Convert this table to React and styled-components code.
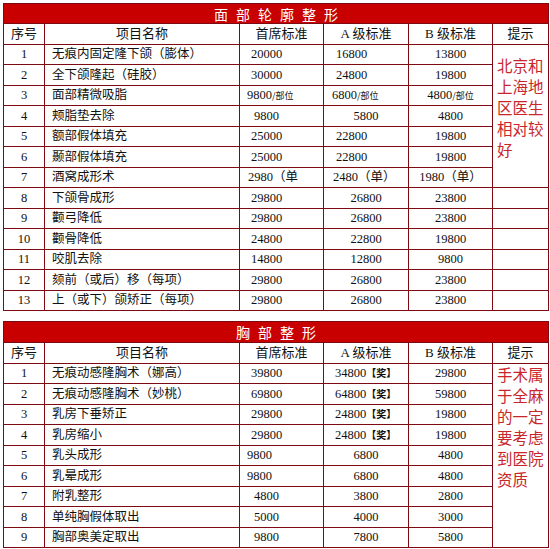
import React from 'react';
import styled, { createGlobalStyle } from 'styled-components';

const GlobalStyle = createGlobalStyle`
  body {
    margin: 0;
    background: #fff;
    font-family: "Liberation Serif", "Noto Sans CJK SC", serif;
    color: #111;
  }
`;

const Page = styled.div`
  width: 545px;
  padding: 3px 0 0 3px;
  display: flex;
  flex-direction: column;
  gap: 10px;
`;

const Table = styled.table`
  width: 545px;
  border-collapse: collapse;
  table-layout: fixed;
  border: 1px solid #7d0a12;
`;

const TitleCell = styled.th`
  height: ${(p) => p.$h}px;
  padding: 0 0 0 8px;
  background: #c80000;
  color: #fff;
  font-family: "Noto Sans CJK SC", sans-serif;
  font-weight: normal;
  font-size: 14px;
  line-height: 16px;
  letter-spacing: 8px;
  text-align: center;
  border: 1px solid #7d0a12;
`;

const Row = styled.tr`
  height: 20.5px;
`;

const HeadCell = styled.th`
  padding: 0;
  font-weight: normal;
  font-size: 13px;
  line-height: 16px;
  text-align: center;
  border: 1px solid #7d0a12;
`;

const NumCell = styled.td`
  padding: 0;
  font-size: 12.5px;
  line-height: 16px;
  text-align: center;
  border: 1px solid #7d0a12;
`;

const NameCell = styled.td`
  padding: 0 0 0 7px;
  font-size: 12.5px;
  line-height: 16px;
  white-space: nowrap;
  overflow: hidden;
  border: 1px solid #7d0a12;
`;

const PriceCell = styled.td`
  padding: 0 0 0 ${(p) => (p.$pad != null ? p.$pad : 0)}px;
  font-size: 12.5px;
  line-height: 16px;
  text-align: ${(p) => (p.$pad != null ? 'left' : 'center')};
  white-space: nowrap;
  overflow: hidden;
  border: 1px solid #7d0a12;
`;

const Unit = styled.span`
  font-family: "Noto Sans CJK SC", sans-serif;
  font-size: 9px;
`;

const Award = styled.span`
  font-family: "Noto Sans CJK SC", sans-serif;
  font-size: 10px;
  font-weight: bold;
`;

const TipCell = styled.td`
  padding: ${(p) => p.$top}px 2px 0 4px;
  vertical-align: top;
  color: #c8262b;
  font-family: "Noto Sans CJK SC", sans-serif;
  font-size: 15.5px;
  line-height: 21px;
  border: 1px solid #7d0a12;
`;

const faceRows = [
  ['无痕内固定隆下颌（膨体）', { v: '20000', pad: 11 }, { v: '16800', pad: 12 }, { v: '13800' }],
  ['全下颌隆起（硅胶）', { v: '30000', pad: 11 }, { v: '24800', pad: 12 }, { v: '19800' }],
  ['面部精微吸脂', { v: '9800', unit: '/部位', pad: 7 }, { v: '6800', unit: '/部位', pad: 8 }, { v: '4800', unit: '/部位' }],
  ['颊脂垫去除', { v: '9800', pad: 14 }, { v: '5800' }, { v: '4800' }],
  ['额部假体填充', { v: '25000', pad: 11 }, { v: '22800', pad: 12 }, { v: '19800' }],
  ['颞部假体填充', { v: '25000', pad: 11 }, { v: '22800', pad: 12 }, { v: '19800' }],
  ['酒窝成形术', { v: '2980（单', pad: 8 }, { v: '2480（单）', pad: 9 }, { v: '1980（单）' }],
  ['下颌骨成形', { v: '29800', pad: 11 }, { v: '26800' }, { v: '23800' }],
  ['颧弓降低', { v: '29800', pad: 11 }, { v: '26800' }, { v: '23800' }],
  ['颧骨降低', { v: '24800', pad: 11 }, { v: '22800' }, { v: '19800' }],
  ['咬肌去除', { v: '14800', pad: 11 }, { v: '12800' }, { v: '9800' }],
  ['颏前（或后）移（每项）', { v: '29800', pad: 11 }, { v: '26800' }, { v: '23800' }],
  ['上（或下）颌矫正（每项）', { v: '29800', pad: 11 }, { v: '26800' }, { v: '23800' }],
];

const chestRows = [
  ['无痕动感隆胸术（娜高）', { v: '39800', pad: 11 }, { v: '34800', award: true, pad: 11 }, { v: '29800' }],
  ['无痕动感隆胸术（妙桃）', { v: '69800', pad: 11 }, { v: '64800', award: true, pad: 11 }, { v: '59800' }],
  ['乳房下垂矫正', { v: '29800', pad: 11 }, { v: '24800', award: true, pad: 11 }, { v: '19800' }],
  ['乳房缩小', { v: '29800', pad: 11 }, { v: '24800', award: true, pad: 11 }, { v: '19800' }],
  ['乳头成形', { v: '9800', pad: 7 }, { v: '6800' }, { v: '4800' }],
  ['乳晕成形', { v: '9800', pad: 7 }, { v: '6800' }, { v: '4800' }],
  ['附乳整形', { v: '4800', pad: 14 }, { v: '3800' }, { v: '2800' }],
  ['单纯胸假体取出', { v: '5000', pad: 14 }, { v: '4000' }, { v: '3000' }],
  ['胸部奥美定取出', { v: '9800', pad: 14 }, { v: '7800' }, { v: '5800' }],
];

function Price({ cell }) {
  return (
    <PriceCell $pad={cell.pad}>
      {cell.v}
      {cell.unit && <Unit>{cell.unit}</Unit>}
      {cell.award && <Award>【奖】</Award>}
    </PriceCell>
  );
}

function PriceTable({ title, titleHeight, rows, tip, tipSpan, tipTop }) {
  return (
    <Table>
      <colgroup>
        <col style={{ width: 41 }} />
        <col style={{ width: 195 }} />
        <col style={{ width: 84 }} />
        <col style={{ width: 85 }} />
        <col style={{ width: 84 }} />
        <col style={{ width: 56 }} />
      </colgroup>
      <tbody>
        <tr>
          <TitleCell colSpan={6} $h={titleHeight}>{title}</TitleCell>
        </tr>
        <Row>
          <HeadCell>序号</HeadCell>
          <HeadCell>项目名称</HeadCell>
          <HeadCell>首席标准</HeadCell>
          <HeadCell>A 级标准</HeadCell>
          <HeadCell>B 级标准</HeadCell>
          <HeadCell>提示</HeadCell>
        </Row>
        {rows.map((r, i) => (
          <Row key={i}>
            <NumCell>{i + 1}</NumCell>
            <NameCell>{r[0]}</NameCell>
            <Price cell={r[1]} />
            <Price cell={r[2]} />
            <Price cell={r[3]} />
            {i === 0 && (
              <TipCell rowSpan={tipSpan} $top={tipTop}>
                {tip.map((line, j) => (
                  <React.Fragment key={j}>
                    {line}
                    {j < tip.length - 1 && <br />}
                  </React.Fragment>
                ))}
              </TipCell>
            )}
            {i >= tipSpan && <TipCell $top={0} />}
          </Row>
        ))}
      </tbody>
    </Table>
  );
}

export default function App() {
  return (
    <>
      <GlobalStyle />
      <Page>
        <PriceTable
          title="面部轮廓整形"
          titleHeight={19}
          rows={faceRows}
          tip={['北京和', '上海地', '区医生', '相对较', '好']}
          tipSpan={7}
          tipTop={10}
        />
        <PriceTable
          title="胸部整形"
          titleHeight={20}
          rows={chestRows}
          tip={['手术属', '于全麻', '的一定', '要考虑', '到医院', '资质']}
          tipSpan={9}
          tipTop={0}
        />
      </Page>
    </>
  );
}
